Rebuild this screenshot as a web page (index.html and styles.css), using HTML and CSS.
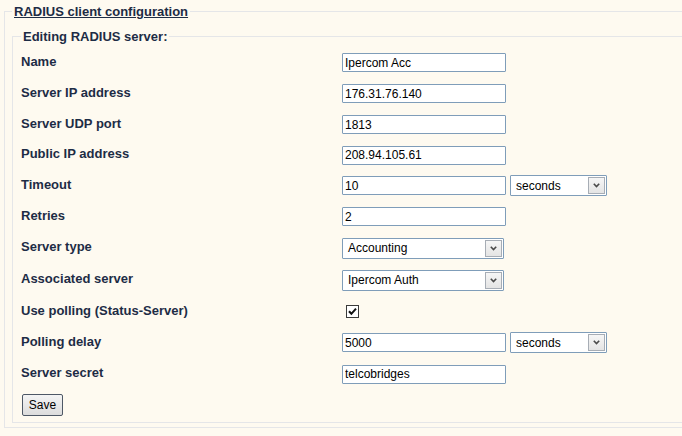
FILE: index.html
```html
<!DOCTYPE html>
<html>
<head>
<meta charset="utf-8">
<title>RADIUS client configuration</title>
<link rel="stylesheet" href="styles.css">
</head>
<body>
<fieldset class="group outer">
  <legend class="legend title">RADIUS client configuration</legend>
  <fieldset class="group inner">
    <legend class="legend">Editing RADIUS server:</legend>
    <div class="form">
      <div class="label">Name</div>
      <div class="field"><input class="text" type="text" value="Ipercom Acc"></div>

      <div class="label">Server IP address</div>
      <div class="field"><input class="text" type="text" value="176.31.76.140"></div>

      <div class="label">Server UDP port</div>
      <div class="field"><input class="text" type="text" value="1813"></div>

      <div class="label">Public IP address</div>
      <div class="field"><input class="text" type="text" value="208.94.105.61"></div>

      <div class="label">Timeout</div>
      <div class="field">
        <input class="text" type="text" value="10">
        <div class="select short"><span class="select-value">seconds</span><span class="arrow"><svg width="7" height="5" viewBox="0 0 7 5"><path d="M0.8 0.8 L3.5 3.6 L6.2 0.8" fill="none" stroke="#4a4a4a" stroke-width="1.6"/></svg></span></div>
      </div>

      <div class="label">Retries</div>
      <div class="field"><input class="text" type="text" value="2"></div>

      <div class="label">Server type</div>
      <div class="field">
        <div class="select wide"><span class="select-value">Accounting</span><span class="arrow"><svg width="7" height="5" viewBox="0 0 7 5"><path d="M0.8 0.8 L3.5 3.6 L6.2 0.8" fill="none" stroke="#4a4a4a" stroke-width="1.6"/></svg></span></div>
      </div>

      <div class="label">Associated server</div>
      <div class="field">
        <div class="select wide"><span class="select-value">Ipercom Auth</span><span class="arrow"><svg width="7" height="5" viewBox="0 0 7 5"><path d="M0.8 0.8 L3.5 3.6 L6.2 0.8" fill="none" stroke="#4a4a4a" stroke-width="1.6"/></svg></span></div>
      </div>

      <div class="label">Use polling (Status-Server)</div>
      <div class="field">
        <span class="checkbox"><svg width="13" height="13" viewBox="0 0 13 13"><rect x="0.5" y="0.5" width="12" height="12" fill="#fff" stroke="#3a3a3a"/><path d="M3 6.2 L5.4 8.8 L10 3.6" fill="none" stroke="#111" stroke-width="2"/></svg></span>
      </div>

      <div class="label">Polling delay</div>
      <div class="field">
        <input class="text" type="text" value="5000">
        <div class="select short"><span class="select-value">seconds</span><span class="arrow"><svg width="7" height="5" viewBox="0 0 7 5"><path d="M0.8 0.8 L3.5 3.6 L6.2 0.8" fill="none" stroke="#4a4a4a" stroke-width="1.6"/></svg></span></div>
      </div>

      <div class="label">Server secret</div>
      <div class="field"><input class="text" type="text" value="telcobridges"></div>

      <div class="actions"><button class="button" type="button">Save</button></div>
    </div>
  </fieldset>
</fieldset>
</body>
</html>
```

FILE: styles.css
```css
html, body {
  margin: 0;
  padding: 0;
  background: #fefaf0;
  overflow: hidden;
  font-family: "Liberation Sans", Arial, sans-serif;
}

.group {
  border: 1px solid #e5e6e8;
  border-right: 0;
  min-width: 0;
}

.outer {
  margin: 4px 0 0 4px;
  padding: 10px 0 4px 7px;
}

.inner {
  margin: 0;
  padding: 3px 0 2px 8px;
}

.legend {
  padding: 0 2px;
  font-size: 13px;
  line-height: 15px;
  font-weight: bold;
  color: #1d2c45;
}

.title {
  text-decoration: underline;
}

.form {
  display: grid;
  grid-template-columns: 321px auto;
  grid-template-rows: 31px 31px 31px 30px 31px 31px 32px 32px 31px 31px 32px 30px;
  align-items: center;
}

.label {
  font-size: 13px;
  line-height: 15px;
  font-weight: bold;
  color: #1d2c45;
  padding-bottom: 3px;
}

.field {
  display: flex;
  align-items: center;
  gap: 4px;
}

.text {
  box-sizing: border-box;
  width: 164px;
  height: 19px;
  margin: 0;
  padding: 0 2px;
  border: 1px solid #7f9db9;
  border-radius: 1px;
  background: #fff;
  font-family: "Liberation Sans", Arial, sans-serif;
  font-size: 12px;
  color: #000;
  outline: none;
}

.select {
  box-sizing: border-box;
  height: 21px;
  display: flex;
  align-items: center;
  justify-content: space-between;
  border: 1px solid #7f9db9;
  border-radius: 1px;
  background: #fff;
  padding: 0 1px 0 5px;
  font-size: 12px;
  color: #000;
}

.select.wide {
  width: 162px;
}

.select.short {
  width: 97px;
}

.arrow {
  box-sizing: border-box;
  width: 17px;
  height: 17px;
  border: 1px solid #a7adb5;
  background: linear-gradient(#f6f6f6, #e4e4e4);
  display: flex;
  align-items: center;
  justify-content: center;
}

.arrow svg {
  display: block;
}

.checkbox {
  display: block;
  width: 13px;
  height: 13px;
  margin-left: 4px;
}

.checkbox svg {
  display: block;
}

.actions {
  grid-column: 1 / 3;
}

.button {
  box-sizing: border-box;
  width: 41px;
  height: 22px;
  margin: 0 0 0 1px;
  padding: 0;
  border: 1px solid #4e5866;
  border-radius: 2px;
  background: linear-gradient(#f4f4f4, #dcdcdc);
  font-family: "Liberation Sans", Arial, sans-serif;
  font-size: 12px;
  color: #000;
}
```
